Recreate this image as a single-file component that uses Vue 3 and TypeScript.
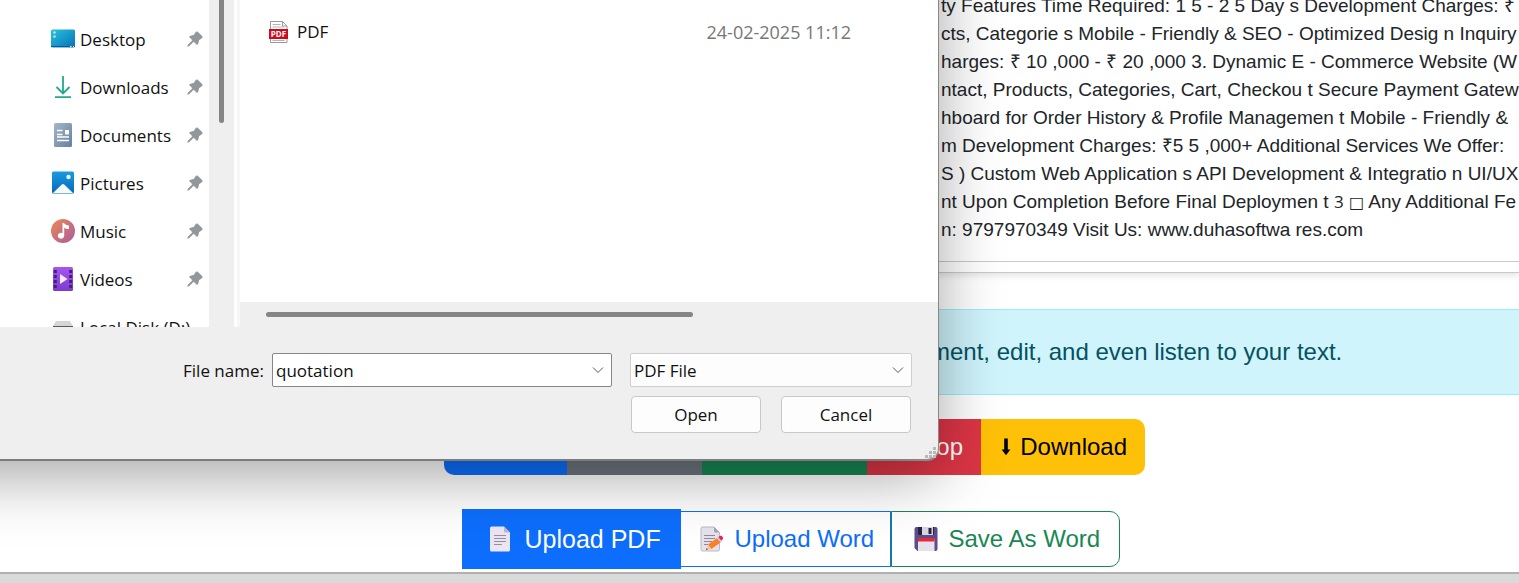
<script setup lang="ts">
import { ref } from 'vue'

type PlaceIcon = 'desktop' | 'downloads' | 'documents' | 'pictures' | 'music' | 'videos' | 'disk'

interface Place {
  label: string
  icon: PlaceIcon
  pinned: boolean
}

const places: Place[] = [
  { label: 'Desktop', icon: 'desktop', pinned: true },
  { label: 'Downloads', icon: 'downloads', pinned: true },
  { label: 'Documents', icon: 'documents', pinned: true },
  { label: 'Pictures', icon: 'pictures', pinned: true },
  { label: 'Music', icon: 'music', pinned: true },
  { label: 'Videos', icon: 'videos', pinned: true },
  { label: 'Local Disk (D:)', icon: 'disk', pinned: false },
]

const linesBefore: string[] = [
  'ty Features Time Required: 1 5 - 2 5 Day s Development Charges: ₹',
  'cts, Categorie s Mobile - Friendly & SEO - Optimized Desig n Inquiry',
  'harges: ₹ 10 ,000 - ₹ 20 ,000 3. Dynamic E - Commerce Website (W',
  'ntact, Products, Categories, Cart, Checkou t Secure Payment Gatew',
  'hboard for Order History & Profile Managemen t Mobile - Friendly &',
  'm Development Charges: ₹5 5 ,000+ Additional Services We Offer:',
  'S ) Custom Web Application s API Development & Integratio n UI/UX',
]

const fileName = ref('quotation')
const fileType = ref('PDF File')
</script>

<template>
  <div class="page">
    <section class="document">
      <div class="sheet">
        <p v-for="line in linesBefore" :key="line">{{ line }}</p>
        <p>nt Upon Completion Before Final Deploymen t <span class="keycap">3</span> <span class="box">□</span> Any Additional Fe</p>
        <p>n: 9797970349 Visit Us: www.duhasoftwa res.com</p>
      </div>
    </section>

    <div class="notice">ment, edit, and even listen to your text.</div>

    <div class="tools">
      <button type="button" class="tool copy" aria-label="Copy"></button>
      <button type="button" class="tool clear" aria-label="Clear"></button>
      <button type="button" class="tool listen" aria-label="Listen"></button>
      <button type="button" class="tool stop">Stop</button>
      <button type="button" class="tool download">
        <svg width="10" height="18" viewBox="0 0 10 18" aria-hidden="true">
          <path d="M3.2 0.5h3.6v11h2.6L5 17.3 0.6 11.500h2.600z" fill="#000" />
        </svg>
        Download
      </button>
    </div>

    <div class="files">
      <button type="button" class="file pdf">
        <svg width="22" height="26" viewBox="0 0 22 26" aria-hidden="true">
          <path d="M2.500 0.500h12.500l6 6v17.500a1.500 1.500 0 0 1-1.500 1.500h-17a1.500 1.500 0 0 1-1.500-1.500v-22a1.500 1.500 0 0 1 1.500-1.500z" fill="#ece5f2" />
          <path d="M15 0.500l6 6h-4.500a1.500 1.500 0 0 1-1.500-1.500z" fill="#c0b6cb" />
          <path d="M5 9.500h12M5 12.500h12M5 15.500h12M5 18.500h8" stroke="#998da3" stroke-width="1.200" />
        </svg>
        Upload PDF
      </button>
      <button type="button" class="file word">
        <svg width="24" height="26" viewBox="0 0 24 26" aria-hidden="true">
          <path d="M2.500 1h11.500l5.500 5.500v17a1.500 1.500 0 0 1-1.500 1.500h-15.500a1.500 1.500 0 0 1-1.500-1.500v-21a1.500 1.500 0 0 1 1.500-1.500z" fill="#e5e3ea" stroke="#bdb8c6" />
          <path d="M14 1l5.500 5.500h-4a1.500 1.500 0 0 1-1.500-1.500z" fill="#aaa3b8" />
          <path d="M4 9.500h11M4 12.500h11M4 15.500h8M4 18.500h4" stroke="#9088a0" stroke-width="1.200" />
          <path d="M6 24l2-5.500 3.500 4.500z" fill="#f4c9a2" />
          <path d="M8 18.500l9-6.500 3.500 4.500-9 6.500z" fill="#f9812a" />
          <path d="M17 12l1.700-1.200 3.500 4.500-1.700 1.200z" fill="#d0cbd8" />
          <path d="M18.300 11.100l1.200-.900c1-.7 2.200-.5 3 .5s.7 2.300-.3 3l-1 .900z" fill="#e8235b" />
          <path d="M6 24l.700-1.900 1.200 1.500z" fill="#49424f" />
        </svg>
        Upload Word
      </button>
      <button type="button" class="file save">
        <svg width="24" height="26" viewBox="0 0 24 26" aria-hidden="true">
          <path d="M2.500 1h19a2 2 0 0 1 2 2v20a2 2 0 0 1-2 2h-18l-3-3v-19a2 2 0 0 1 2-2z" fill="#5d4d8b" />
          <path d="M4 1h16v6.500a1.500 1.500 0 0 1-1.500 1.500h-13a1.500 1.500 0 0 1-1.500-1.500z" fill="#2b2144" />
          <path d="M8 1h11v8h-11z" fill="#d9d7de" />
          <path d="M14.500 2h3v6h-3z" fill="#2b2144" />
          <path d="M4 13h16.500v12h-16.500z" fill="#e5e3e9" />
          <path d="M4 12h16.500v3.500h-16.500z" fill="#e52b3d" />
        </svg>
        Save As Word
      </button>
    </div>

    <div class="taskbar"></div>

    <div class="dialog" role="dialog" aria-label="Open">
      <div class="browser">
        <nav class="places">
          <ul>
            <li v-for="place in places" :key="place.label">
              <a href="#">
                <svg class="place-icon" width="24" height="24" viewBox="0 0 24 24" aria-hidden="true">
                  <defs>
                    <linearGradient id="deskFill" x1="0" y1="0" x2="1" y2="1">
                      <stop offset="0" stop-color="#27c3dd" />
                      <stop offset="1" stop-color="#0871b8" />
                    </linearGradient>
                    <linearGradient id="docFill" x1="0" y1="0" x2="1" y2="1">
                      <stop offset="0" stop-color="#a4b6cc" />
                      <stop offset="1" stop-color="#65809f" />
                    </linearGradient>
                    <linearGradient id="picFill" x1="0" y1="0" x2="0" y2="1">
                      <stop offset="0" stop-color="#1a9be0" />
                      <stop offset="1" stop-color="#0669ba" />
                    </linearGradient>
                    <linearGradient id="musicFill" x1="0" y1="0" x2="1" y2="1">
                      <stop offset="0" stop-color="#ee8a55" />
                      <stop offset="1" stop-color="#a95a9e" />
                    </linearGradient>
                    <linearGradient id="videoFill" x1="0" y1="0" x2="0" y2="1">
                      <stop offset="0" stop-color="#a855f0" />
                      <stop offset="1" stop-color="#7c3bcf" />
                    </linearGradient>
                  </defs>
                  <g v-if="place.icon === 'desktop'">
                    <rect x="0" y="2.500" width="24" height="18" rx="1.500" fill="url(#deskFill)" />
                    <path d="M0 19.500h24" stroke="#075a93" />
                    <path d="M2.500 4.500h2v2h-2zM2.500 8.500h2v2h-2z" fill="#d9f7fc" />
                    <path d="M19 19h1.500v1h-1.500zM22 19h1v1h-1z" fill="#fff" />
                  </g>
                  <g v-else-if="place.icon === 'downloads'" fill="none" stroke="#22a88d" stroke-width="1.800">
                    <path d="M12 1v17.500M5.500 12l6.500 6.500 6.500-6.500M4 22.200h16" />
                  </g>
                  <g v-else-if="place.icon === 'documents'">
                    <rect x="3" y="0" width="18" height="24" rx="1.500" fill="url(#docFill)" />
                    <path d="M6 7.500h5.500M6 11.500h5.500M6 14h12M6 17.500h12" stroke="#fff" stroke-width="1.300" />
                    <path d="M14 7h4v4.500h-4z" fill="#fff" />
                  </g>
                  <g v-else-if="place.icon === 'pictures'">
                    <rect x="1" y="0.500" width="22" height="22" rx="1.500" fill="url(#picFill)" />
                    <path d="M2 22l8.800-8.500a1.800 1.800 0 0 1 2.400 0l8.800 8.500z" fill="#f4fbff" />
                    <circle cx="17.500" cy="6" r="2.200" fill="#e9f7ff" />
                  </g>
                  <g v-else-if="place.icon === 'music'">
                    <circle cx="12" cy="12" r="12" fill="url(#musicFill)" />
                    <path d="M11.500 4h1.500c.8 1.800 2.500 2.200 5 2.500v3.500c-2 .1-3.700-.4-4.800-1.500v8.300a3.200 2.900 0 1 1-1.700-2.600z" fill="#fff" />
                  </g>
                  <g v-else-if="place.icon === 'videos'">
                    <rect x="2" y="0" width="20" height="24" rx="1.500" fill="url(#videoFill)" />
                    <path d="M4.300 3v19M19.700 3v19" stroke="#43207e" stroke-width="3" stroke-dasharray="3 2" />
                    <path d="M9 7l7.500 5-7.500 5z" fill="#f3eaff" />
                  </g>
                  <g v-else>
                    <path d="M5 6h14l3 5v6h-20v-6z" fill="#d5d5d5" />
                    <path d="M2 11h20v6h-20z" fill="#5a5a5a" />
                  </g>
                </svg>
                <span class="place-label">{{ place.label }}</span>
                <svg v-if="place.pinned" width="16" height="16" viewBox="0 0 16 16" aria-hidden="true">
                  <path d="M8.600 1c.5-.700 1.500-.800 2.100-.200l4.400 4.300c.7.700.6 1.600-.2 2.100l-2.700 1.700-1.100 4.200c-.2.800-1 1-1.600.400L6.700 10.700l-4.700 4.600-1.700.400.400-1.700 4.600-4.700L2.600 6.600c-.6-.6-.4-1.400.4-1.600l4-1.200z" fill="#92979b" />
                </svg>
              </a>
            </li>
          </ul>
        </nav>
        <div class="side-scroll"><div class="side-thumb"></div></div>
        <div class="divider"></div>
        <div class="listing">
          <div class="entry">
            <svg width="20" height="22" viewBox="0 0 20 22" aria-hidden="true">
              <path d="M1.500 0.500h12l4.500 4.500v16.500h-16.500z" fill="#fff" stroke="#9a9a9a" />
              <path d="M13.500 0.500v4.500h4.500" fill="none" stroke="#9a9a9a" />
              <path d="M3.500 3.500h8M3.500 6h12M3.500 19.500h12" stroke="#b5b5b5" />
              <rect x="0" y="8" width="19" height="10" fill="#cf0a1f" />
              <text x="9.500" y="16" text-anchor="middle" class="badge">PDF</text>
            </svg>
            <span class="entry-name">PDF</span>
            <time>24-02-2025 11:12</time>
          </div>
          <div class="list-scroll"><div class="list-thumb"></div></div>
        </div>
      </div>

      <form class="controls" @submit.prevent>
        <label for="file-name">File name:</label>
        <div class="combo">
          <input id="file-name" v-model="fileName" type="text" />
          <svg width="12" height="8" viewBox="0 0 12 8" aria-hidden="true">
            <path d="M1 1.500l5 5 5-5" fill="none" stroke="#555" />
          </svg>
        </div>
        <div class="kind">
          <select v-model="fileType" aria-label="File type">
            <option>PDF File</option>
          </select>
          <svg width="12" height="8" viewBox="0 0 12 8" aria-hidden="true">
            <path d="M1 1.500l5 5 5-5" fill="none" stroke="#555" />
          </svg>
        </div>
        <div class="actions">
          <button type="submit">Open</button>
          <button type="button">Cancel</button>
        </div>
      </form>
      <svg class="grip" width="12" height="12" viewBox="0 0 12 12" aria-hidden="true">
        <path d="M9 0h3v3h-3zM9 4h3v3h-3zM5 4h3v3h-3zM9 8h3v3h-3zM5 8h3v3h-3zM1 8h3v3h-3z" fill="#b9b9b9" />
      </svg>
    </div>
  </div>
</template>

<style>
body {
  margin: 0;
}
</style>

<style scoped>
* {
  box-sizing: border-box;
}

svg {
  flex: none;
}

.page {
  position: relative;
  display: flex;
  flex-direction: column;
  min-height: 100vh;
  overflow: hidden;
  background: #fff;
  font-family: "Liberation Sans", Arial, sans-serif;
  color: #212529;
}

button,
input,
select {
  margin: 0;
  font-family: inherit;
}

.document {
  padding-bottom: 10px;
  border-bottom: 1px solid #c9c9c9;
  box-shadow: 0 3px 6px rgba(0, 0, 0, 0.1);
}

.sheet {
  margin-top: -8px;
  padding: 0 0 17px 941px;
  border-bottom: 1px solid #c9c9c9;
  font-size: 19px;
  line-height: 28px;
  white-space: nowrap;
}

.sheet p {
  margin: 0;
}

.keycap {
  font-family: "Open Sans", sans-serif;
  font-size: 17px;
  line-height: 20px;
}

.box {
  font-family: "DejaVu Sans", sans-serif;
  font-size: 16px;
  line-height: 20px;
}

.notice {
  margin-top: 36px;
  padding: 24px 0 24px 930px;
  border-top: 1px solid #9eeaf9;
  border-bottom: 1px solid #9eeaf9;
  background: #cff4fc;
  color: #055160;
  font-size: 24px;
  line-height: 36px;
  white-space: nowrap;
}

.tools {
  display: flex;
  justify-content: center;
  margin-top: 24px;
  padding-left: 70px;
}

.tool {
  height: 56px;
  padding: 0 18px;
  border: 0;
  color: #fff;
  font-size: 24px;
}

.copy {
  width: 123px;
  border-radius: 0 0 0 10px;
  background: #0d6efd;
}

.clear {
  width: 135px;
  background: #6c757d;
}

.listen {
  width: 165px;
  background: #198754;
}

.stop {
  width: 114px;
  background: #dc3545;
  text-align: right;
}

.download {
  display: flex;
  align-items: center;
  justify-content: space-between;
  width: 164px;
  padding-left: 20px;
  border-radius: 0 10px 10px 0;
  background: #ffc107;
  color: #000;
}

.files {
  display: flex;
  align-items: center;
  justify-content: center;
  margin: 34px 0 3px;
  padding-left: 62px;
}

.file {
  display: flex;
  align-items: center;
  gap: 11px;
  height: 56px;
  padding: 0 19px;
  border: 1px solid #0d6efd;
  background: transparent;
  color: #0d6efd;
  font-size: 24px;
  white-space: nowrap;
}

.pdf {
  gap: 14px;
  width: 219px;
  height: 60px;
  padding: 0 0 0 26px;
  background: #0d6efd;
  color: #fff;
  font-size: 25px;
}

.word {
  width: 210px;
  padding-right: 0;
  border-left: 0;
}

.save {
  width: 229px;
  padding: 0 0 0 22px;
  border-color: #198754;
  border-radius: 0 10px 10px 0;
  color: #198754;
}

.taskbar {
  flex: 1;
  min-height: 10px;
  border-top: 2px solid #b0b0b0;
  background: #dadada;
}

.dialog {
  position: absolute;
  top: 0;
  left: 0;
  z-index: 1;
  width: 62%;
  max-width: 939px;
  border-right: 1px solid #a5a5a5;
  border-bottom: 2px solid #a5a5a5;
  border-radius: 0 0 12px 0;
  background: #efefef;
  color: #111;
  font-family: "Open Sans", "Noto Sans", sans-serif;
  font-size: 17px;
}

.dialog::before {
  content: "";
  position: absolute;
  inset: -80px 0 0 -80px;
  z-index: -1;
  border-radius: 0 0 12px 0;
  box-shadow: 0 16px 64px rgba(0, 0, 0, 0.36);
}

.browser {
  display: flex;
  height: 327px;
  overflow: hidden;
  background: #efefef;
}

.places {
  flex: none;
  width: 209px;
  overflow: hidden;
  background: #fff;
}

.places ul {
  margin: 0;
  padding: 15px 0 0;
  list-style: none;
}

.places a {
  display: flex;
  align-items: center;
  gap: 5px;
  height: 48px;
  padding: 0 6px 0 51px;
  color: inherit;
  text-decoration: none;
  white-space: nowrap;
}

.place-label {
  flex: 1;
}

.side-scroll {
  flex: none;
  width: 25px;
  padding-left: 10px;
}

.side-thumb {
  width: 5px;
  height: 123px;
  border-radius: 0 0 3px 3px;
  background: #858585;
}

.divider {
  flex: none;
  width: 6px;
  border-right: 3px solid #f7f7f7;
  background: #fff;
}

.listing {
  display: flex;
  flex: 1;
  flex-direction: column;
  justify-content: space-between;
  background: #fff;
}

.entry {
  display: flex;
  align-items: center;
  margin-top: 20px;
  padding: 0 87px 0 29px;
  line-height: 24px;
}

.badge {
  fill: #fff;
  font-family: "Open Sans", sans-serif;
  font-size: 8px;
  font-weight: 700;
}

.entry-name {
  flex: 1;
  margin-left: 8px;
}

.entry time {
  color: #777;
  font-size: 18px;
}

.list-scroll {
  height: 25px;
  padding: 10px 245px 0 26px;
  background: #efefef;
}

.list-thumb {
  height: 5px;
  border-radius: 3px;
  background: #858585;
}

.controls {
  display: grid;
  grid-template-columns: 264px 1fr 282px;
  column-gap: 8px;
  row-gap: 9px;
  align-items: center;
  padding: 26px 26px 26px 0;
}

.controls label {
  text-align: right;
}

.combo,
.kind {
  display: flex;
  align-items: center;
  height: 34px;
  padding-right: 7px;
  border: 1px solid #868686;
  border-radius: 2px;
  background: #fff;
}

.combo {
  margin-right: 10px;
}

.kind {
  border-color: #cfcfcf;
  background: #fdfdfd;
}

.combo input,
.kind select {
  flex: 1;
  min-width: 0;
  height: 100%;
  padding: 0 3px;
  border: 0;
  outline: 0;
  background: transparent;
  color: inherit;
  font-size: 17px;
  appearance: none;
}

.actions {
  display: grid;
  grid-column: 3;
  grid-template-columns: 1fr 1fr;
  gap: 20px;
  padding: 0 1px;
}

.actions button {
  height: 37px;
  border: 1px solid #c8c8c8;
  border-radius: 4px;
  background: #fdfdfd;
  color: inherit;
  font-size: 17px;
}

.grip {
  position: absolute;
  right: 2px;
  bottom: 0;
}
</style>
